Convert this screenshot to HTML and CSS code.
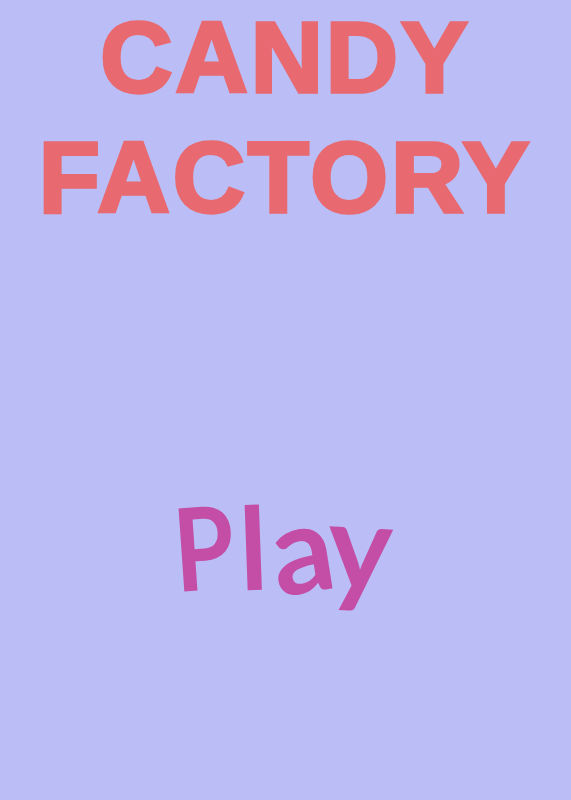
FILE: index.html
```html
<!DOCTYPE html>
<html>
<head>
<meta charset="utf-8">
<link rel="stylesheet" href="styles.css">
</head>
<body>
<main class="screen">
  <h1 class="title">CANDY<br>FACTORY</h1>
  <div class="play"><span class="p1">P</span><span class="p2">l</span><span class="p3">a</span><span class="p4">y</span></div>
</main>
</body>
</html>
```
FILE: styles.css
```css
html, body {
  margin: 0;
  padding: 0;
  background: #babdf6;
}
.screen {
  width: 571px;
  height: 800px;
  display: flex;
  flex-direction: column;
  align-items: center;
  overflow: hidden;
}
.title {
  margin: -3px 0 0 0;
  font-family: "Liberation Sans", Arial, sans-serif;
  font-weight: 700;
  font-size: 100px;
  line-height: 120px;
  letter-spacing: 3px;
  color: #e86a70;
  -webkit-text-stroke: 3.5px #e86a70;
  text-align: center;
}
.play {
  margin: 243px 12px 0 0;
  font-family: Lato, "Open Sans", sans-serif;
  font-weight: 700;
  font-size: 115px;
  line-height: 130px;
  color: #c44ea6;
  display: flex;
  align-items: baseline;
}
.play span { display: inline-block; }
.p1 { transform: rotate(-4deg) scaleX(0.85); }
.p2 { transform: rotate(-2deg); margin-right: 4px; }
.p3 { transform: rotate(-9deg) scale(1.06); }
.p4 { transform: rotate(3deg) scale(1.06) translateY(-2px); }
```
